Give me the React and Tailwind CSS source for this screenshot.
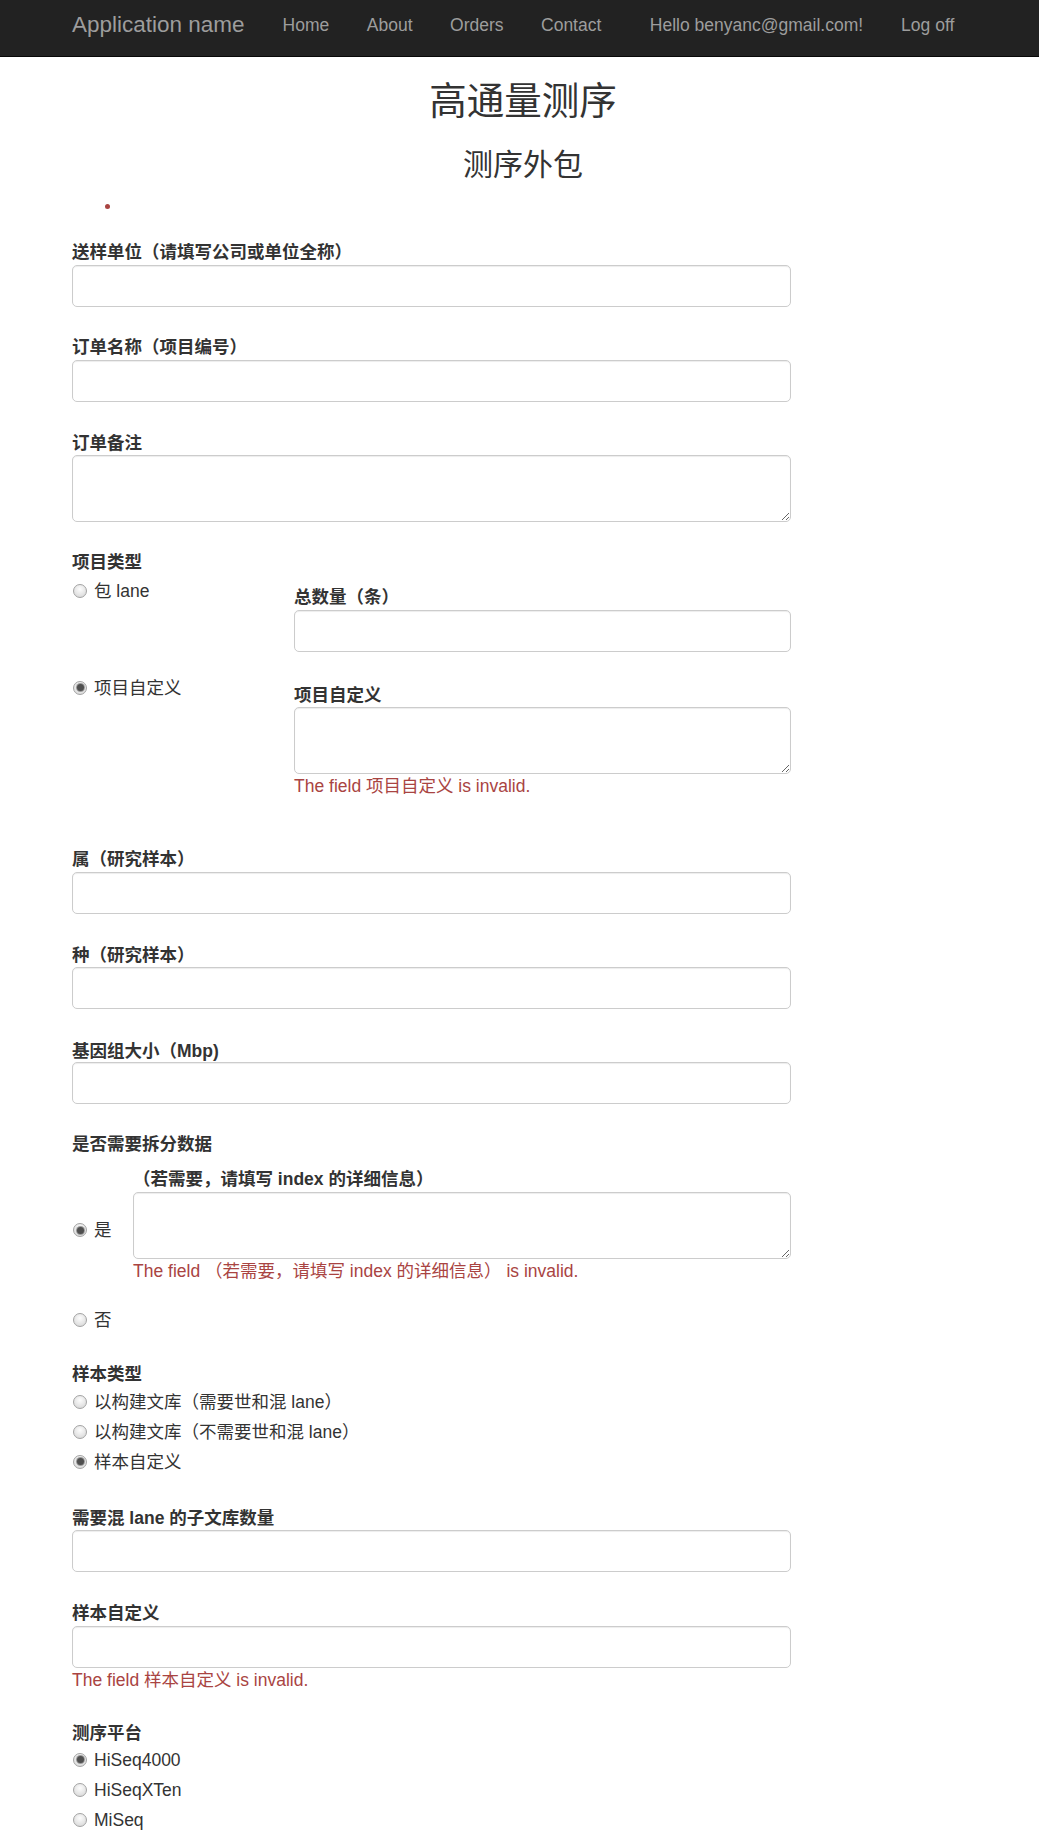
import React from "react";

const FONT = "font-['Liberation_Sans','Noto_Sans_CJK_SC',sans-serif]";

function Label({ children, className = "" }) {
  return (
    <div className={`h-[24px] pt-[2px] leading-[24px] text-[17.5px] font-bold text-[#333] whitespace-nowrap ${className}`}>
      {children}
    </div>
  );
}

function TextInput({ className = "", w = "w-[719px]" }) {
  return (
    <input
      type="text"
      className={`block ${w} h-[42px] bg-white border border-[#ccc] rounded-[5px] shadow-[inset_0_1px_1px_rgba(0,0,0,0.075)] outline-none ${className}`}
    />
  );
}

function TextArea({ className = "", w = "w-[719px]" }) {
  return (
    <textarea
      className={`block ${w} h-[67px] bg-white border border-[#ccc] rounded-[5px] shadow-[inset_0_1px_1px_rgba(0,0,0,0.075)] outline-none ${className}`}
    />
  );
}

function ErrorText({ children, className = "" }) {
  return (
    <div className={`h-[20px] pt-[1px] leading-[20px] text-[17.5px] text-[#a94442] whitespace-nowrap ${className}`}>
      {children}
    </div>
  );
}

function Radio({ label, checked, className = "" }) {
  return (
    <div className={`flex items-center h-[24px] pt-[4px] leading-[24px] text-[17.5px] text-[#333] whitespace-nowrap ${className}`}>
      <span className="ml-[1px] w-[14px] h-[14px] shrink-0 rounded-full border border-[#a3a3a3] bg-[radial-gradient(circle_at_50%_35%,#fdfdfd_0%,#e6e6e6_55%,#d2d2d2_100%)] flex items-center justify-center">
        {checked && (
          <span className="w-[7px] h-[7px] rounded-full bg-[#4f4f4f] shadow-[0_0_0_1px_#9a9a9a]" />
        )}
      </span>
      <span className="ml-[7px]">{label}</span>
    </div>
  );
}

export default function App() {
  return (
    <div className={`${FONT} bg-white text-[#333] min-h-[1837px]`}>
      {/* Navbar */}
      <nav className="h-[57px] bg-[#222] border-b border-[#080808]">
        <div className="flex items-start pl-[72px] text-[#9d9d9d] whitespace-nowrap">
          <span className="mt-[13px] h-[24px] leading-[24px] text-[22.5px]">Application name</span>
          <ul className="flex ml-[38px] gap-[37.5px] mt-[13px] text-[17.5px] leading-[24px]">
            <li>Home</li>
            <li>About</li>
            <li>Orders</li>
            <li>Contact</li>
          </ul>
          <ul className="flex ml-[48.5px] gap-[38px] mt-[13px] text-[17.5px] leading-[24px]">
            <li>Hello benyanc@gmail.com!</li>
            <li>Log off</li>
          </ul>
        </div>
      </nav>

      <main className="pl-[72px] pr-[65px]">
        <h2 className="mt-[24px] h-[41px] leading-[41px] text-[37.5px] font-normal text-center">高通量测序</h2>
        <h3 className="mt-[25.5px] h-[33px] leading-[33px] text-[30px] font-normal text-center">测序外包</h3>
        <div className="mt-[23.5px] ml-[33px] w-[5px] h-[5px] rounded-full bg-[#a94442]" />

        <form className="block">
          {/* 送样单位 */}
          <Label className="mt-[29px]">送样单位（请填写公司或单位全称）</Label>
          <TextInput className="mt-[3px]" />

          <Label className="mt-[26px]">订单名称（项目编号）</Label>
          <TextInput className="mt-[3px]" />

          <Label className="mt-[27px]">订单备注</Label>
          <TextArea className="mt-[2px]" />

          {/* 项目类型 */}
          <Label className="mt-[26px]">项目类型</Label>
          <div className="flex mt-[5px]">
            <div className="w-[222px] shrink-0">
              <Radio label="包 lane" />
            </div>
            <div className="pt-[6px]">
              <Label>总数量（条）</Label>
              <TextInput className="mt-[3px]" w="w-[497px]" />
            </div>
          </div>
          <div className="flex">
            <div className="w-[222px] shrink-0 pt-[21.5px]">
              <Radio label="项目自定义" checked />
            </div>
            <div className="pt-[29px]">
              <Label>项目自定义</Label>
              <TextArea className="mt-[2px]" w="w-[497px]" />
              <ErrorText className="mt-[1px]">The field 项目自定义 is invalid.</ErrorText>
            </div>
          </div>

          <Label className="mt-[50px]">属（研究样本）</Label>
          <TextInput className="mt-[3px]" />

          <Label className="mt-[27px]">种（研究样本）</Label>
          <TextInput className="mt-[2px]" />

          <Label className="mt-[28px]">基因组大小（Mbp)</Label>
          <TextInput className="mt-[1px]" />

          {/* 拆分数据 */}
          <Label className="mt-[26px]">是否需要拆分数据</Label>
          <div className="flex">
            <div className="w-[61px] shrink-0 pt-[62px]">
              <Radio label="是" checked />
            </div>
            <div className="pt-[11px]">
              <Label>（若需要，请填写 index 的详细信息）</Label>
              <TextArea className="mt-[3px]" w="w-[658px]" />
              <ErrorText className="mt-[1px]">The field （若需要，请填写 index 的详细信息） is invalid.</ErrorText>
            </div>
          </div>
          <Radio label="否" className="mt-[25.5px]" />

          {/* 样本类型 */}
          <Label className="mt-[30.5px]">样本类型</Label>
          <div className="flex flex-col gap-[6px] mt-[3.5px]">
            <Radio label="以构建文库（需要世和混 lane）" />
            <Radio label="以构建文库（不需要世和混 lane）" />
            <Radio label="样本自定义" checked />
          </div>

          <Label className="mt-[32px]">需要混 lane 的子文库数量</Label>
          <TextInput className="mt-[2px]" />

          <Label className="mt-[27.5px]">样本自定义</Label>
          <TextInput className="mt-[2.5px]" />
          <ErrorText className="mt-[1px]">The field 样本自定义 is invalid.</ErrorText>

          {/* 测序平台 */}
          <Label className="mt-[30px]">测序平台</Label>
          <div className="flex flex-col gap-[6px] mt-[3px]">
            <Radio label="HiSeq4000" checked />
            <Radio label="HiSeqXTen" />
            <Radio label="MiSeq" />
          </div>
        </form>
      </main>
    </div>
  );
}
